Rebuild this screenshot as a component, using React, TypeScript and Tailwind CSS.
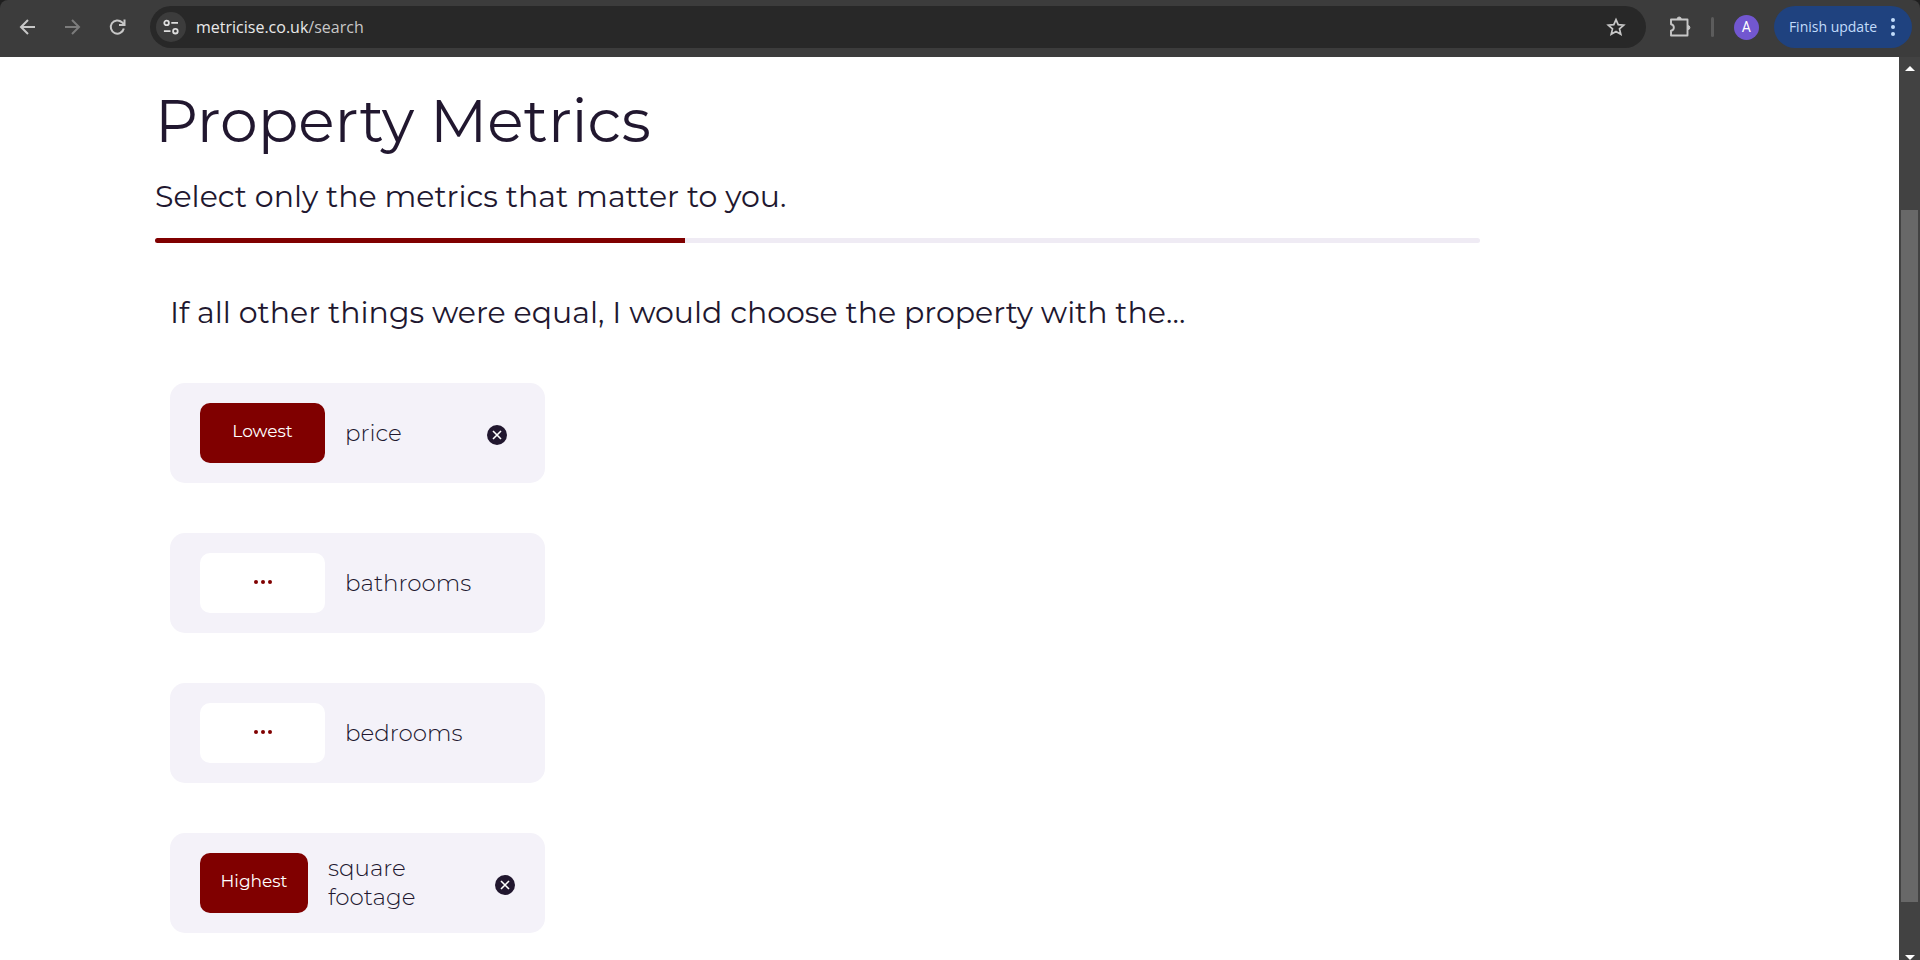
import { useState } from 'react';
import { clsx } from 'clsx';

type Preference = 'Lowest' | 'Highest' | null;

interface Metric {
  id: string;
  label: string;
  preference: Preference;
  compact?: boolean;
}

const INITIAL_METRICS: Metric[] = [
  { id: 'price', label: 'price', preference: 'Lowest' },
  { id: 'bathrooms', label: 'bathrooms', preference: null },
  { id: 'bedrooms', label: 'bedrooms', preference: null },
  { id: 'footage', label: 'square footage', preference: 'Highest', compact: true },
];

const PROGRESS = 40;

function BrowserBar() {
  return (
    <div className="bg-[#1f1f1f]">
      <header className="flex h-[57px] items-center rounded-t-lg bg-[#3c3c3c] pr-2 pb-[3px] pl-4 font-['Open_Sans','Noto_Sans',sans-serif]">
        <div className="flex shrink-0 items-center gap-[21px] text-[#c7c7c7]">
          <button aria-label="Back" className="flex size-6 items-center justify-center">
            <svg width="18" height="18" viewBox="0 0 18 18" fill="none" stroke="currentColor" strokeWidth="2">
              <path d="M16 9H2.5M9 2 2 9l7 7" />
            </svg>
          </button>
          <button aria-label="Forward" disabled className="flex size-6 items-center justify-center text-[#7c7c7c]">
            <svg width="18" height="18" viewBox="0 0 18 18" fill="none" stroke="currentColor" strokeWidth="2">
              <path d="M1 9h13.5M8 2l7 7-7 7" />
            </svg>
          </button>
          <button aria-label="Reload" className="flex size-6 items-center justify-center">
            <svg width="18" height="18" viewBox="0 0 18 18" fill="none" stroke="currentColor" strokeWidth="2">
              <path d="M14.8 10.5A6.6 6.6 0 1 1 13 4.3L15.5 6.5" />
              <path d="M15.5 1.5v5.5H10" />
            </svg>
          </button>
        </div>

        <div className="ml-5 flex h-[42px] min-w-0 flex-1 items-center rounded-full bg-[#282828] pr-[19px] pl-[6px]">
          <button aria-label="Site information" className="flex size-[30px] shrink-0 items-center justify-center rounded-full bg-[#3c3c3c] text-[#dedede]">
            <svg width="18" height="18" viewBox="0 0 18 18" fill="none" stroke="currentColor" strokeWidth="1.8">
              <circle cx="4.6" cy="4.9" r="2.3" />
              <path d="M9.3 4.9H16M1.9 13.2H8.5" />
              <circle cx="13.4" cy="13.2" r="2.3" />
            </svg>
          </button>
          <p className="ml-[10px] flex-1 truncate text-[16px] leading-6 text-[#c7c7c7]">
            <span className="text-[#e8e8e8]">metricise.co.uk</span>/search
          </p>
          <button aria-label="Bookmark this tab" className="flex size-[22px] shrink-0 items-center justify-center text-[#c7c7c7]">
            <svg width="20" height="20" viewBox="0 0 20 20" fill="none" stroke="currentColor" strokeWidth="1.7">
              <path d="m10 2.6 2.2 5.1 5.5.5-4.2 3.7 1.3 5.4-4.8-2.9-4.8 2.9 1.3-5.4-4.2-3.7 5.5-.5Z" />
            </svg>
          </button>
        </div>

        <div className="flex shrink-0 items-center">
          <button aria-label="Extensions" className="ml-[22px] flex size-6 items-center justify-center text-[#c7c7c7]">
            <svg width="22" height="22" viewBox="0 0 22 22" fill="none" stroke="currentColor" strokeWidth="1.9" strokeLinejoin="round">
              <path d="M2 3.5H18.5V19.5H2v-4.7c3.8-.8 3.8-5.8 0-6.6Z" />
              <path d="M8.2 3a2 2 0 0 1 4 0ZM18.9 9.6a2 2 0 0 1 0 4Z" fill="currentColor" strokeWidth="1" />
            </svg>
          </button>
          <span className="ml-[19px] h-5 w-[3px] rounded-full bg-[#5c5c5c]" />
          <button className="ml-5 flex size-[25px] items-center justify-center rounded-full bg-[#7257d0] font-[Roboto,sans-serif] text-[14px] leading-4 text-white">
            A
          </button>
          <button className="ml-[15px] flex h-[42px] items-center gap-[13px] rounded-full bg-[#1f427f] pr-4 pl-[15px] text-[14px] leading-5 text-[#c2dcfb]">
            Finish update
            <svg width="6" height="18" viewBox="0 0 6 18" fill="currentColor">
              <circle cx="3" cy="2" r="2" />
              <circle cx="3" cy="9" r="2" />
              <circle cx="3" cy="16" r="2" />
            </svg>
          </button>
        </div>
      </header>
    </div>
  );
}

function MetricCard({ metric, onToggle, onClear }: { metric: Metric; onToggle: () => void; onClear: () => void }) {
  const { label, preference, compact } = metric;

  return (
    <li className="flex h-[100px] items-center rounded-[15px] bg-[#f4f2f9] px-[30px]">
      <button
        onClick={onToggle}
        aria-label={preference ? undefined : `Choose ${label}`}
        className={clsx(
          'flex h-[60px] shrink-0 items-center justify-center rounded-[10px] pb-1 text-[17px] leading-6',
          compact ? 'w-[108px]' : 'w-[125px]',
          preference ? 'bg-[#800000] text-white' : 'bg-white text-[#800000]'
        )}
      >
        {preference ?? (
          <svg width="20" height="6" viewBox="0 0 20 6" fill="currentColor">
            <circle cx="3" cy="4" r="2" />
            <circle cx="10" cy="4" r="2" />
            <circle cx="17" cy="4" r="2" />
          </svg>
        )}
      </button>
      <span className={clsx('ml-5 text-[23px] leading-[29px] font-light', compact && 'w-24')}>{label}</span>
      {preference && (
        <button onClick={onClear} aria-label={`Clear ${label}`} className={clsx('ml-auto pt-1', !compact && 'mr-2')}>
          <svg width="20" height="20" viewBox="0 0 20 20">
            <circle cx="10" cy="10" r="10" fill="#21172f" />
            <path d="m6 6 8 8m0-8-8 8" stroke="#fff" strokeWidth="1.6" />
          </svg>
        </button>
      )}
    </li>
  );
}

function ScrollTrack() {
  return (
    <div aria-hidden="true" className="flex w-[21px] shrink-0 flex-col items-center bg-[#424242] pt-[9px] text-white">
      <svg width="10" height="5" viewBox="0 0 10 5" fill="currentColor">
        <path d="M5 0 10 5H0Z" />
      </svg>
      <div className="flex w-full flex-1 flex-col px-[2px] pt-[139px]">
        <div className="flex-1 bg-[#686868]" />
        <div className="h-[53px]" />
      </div>
      <svg width="10" height="5" viewBox="0 0 10 5" fill="currentColor">
        <path d="M5 5 10 0H0Z" />
      </svg>
    </div>
  );
}

export default function App() {
  const [metrics, setMetrics] = useState(INITIAL_METRICS);

  const setPreference = (id: string, preference: Preference) =>
    setMetrics(list => list.map(m => (m.id === id ? { ...m, preference } : m)));

  return (
    <div className="flex min-h-screen flex-col bg-white">
      <BrowserBar />
      <div className="flex flex-1">
        <main className="min-w-0 flex-1 pr-[21.8%] pl-[155px] font-[Montserrat,Inter,sans-serif] text-[#21172f]">
          <h1 className="pt-7 text-[60px] leading-[72px]">Property Metrics</h1>
          <h2 className="mt-5 text-[30px] leading-10">Select only the metrics that matter to you.</h2>
          <div
            role="progressbar"
            aria-label="Search progress"
            aria-valuenow={PROGRESS}
            className="mt-[21px] h-[5px] overflow-hidden rounded-full bg-[#efebf4]"
          >
            <div className="h-full bg-[#800000]" style={{ width: `${PROGRESS}%` }} />
          </div>

          <section className="px-[15px] pt-[50px]">
            <h3 className="text-[30px] leading-10">
              If all other things were equal, I would choose the property with the…
            </h3>
            <ul className="mt-[50px] flex max-w-[375px] flex-col gap-[50px]">
              {metrics.map(metric => (
                <MetricCard
                  key={metric.id}
                  metric={metric}
                  onToggle={() => setPreference(metric.id, metric.preference === 'Lowest' ? 'Highest' : 'Lowest')}
                  onClear={() => setPreference(metric.id, null)}
                />
              ))}
            </ul>
          </section>
        </main>
        <ScrollTrack />
      </div>
    </div>
  );
}
